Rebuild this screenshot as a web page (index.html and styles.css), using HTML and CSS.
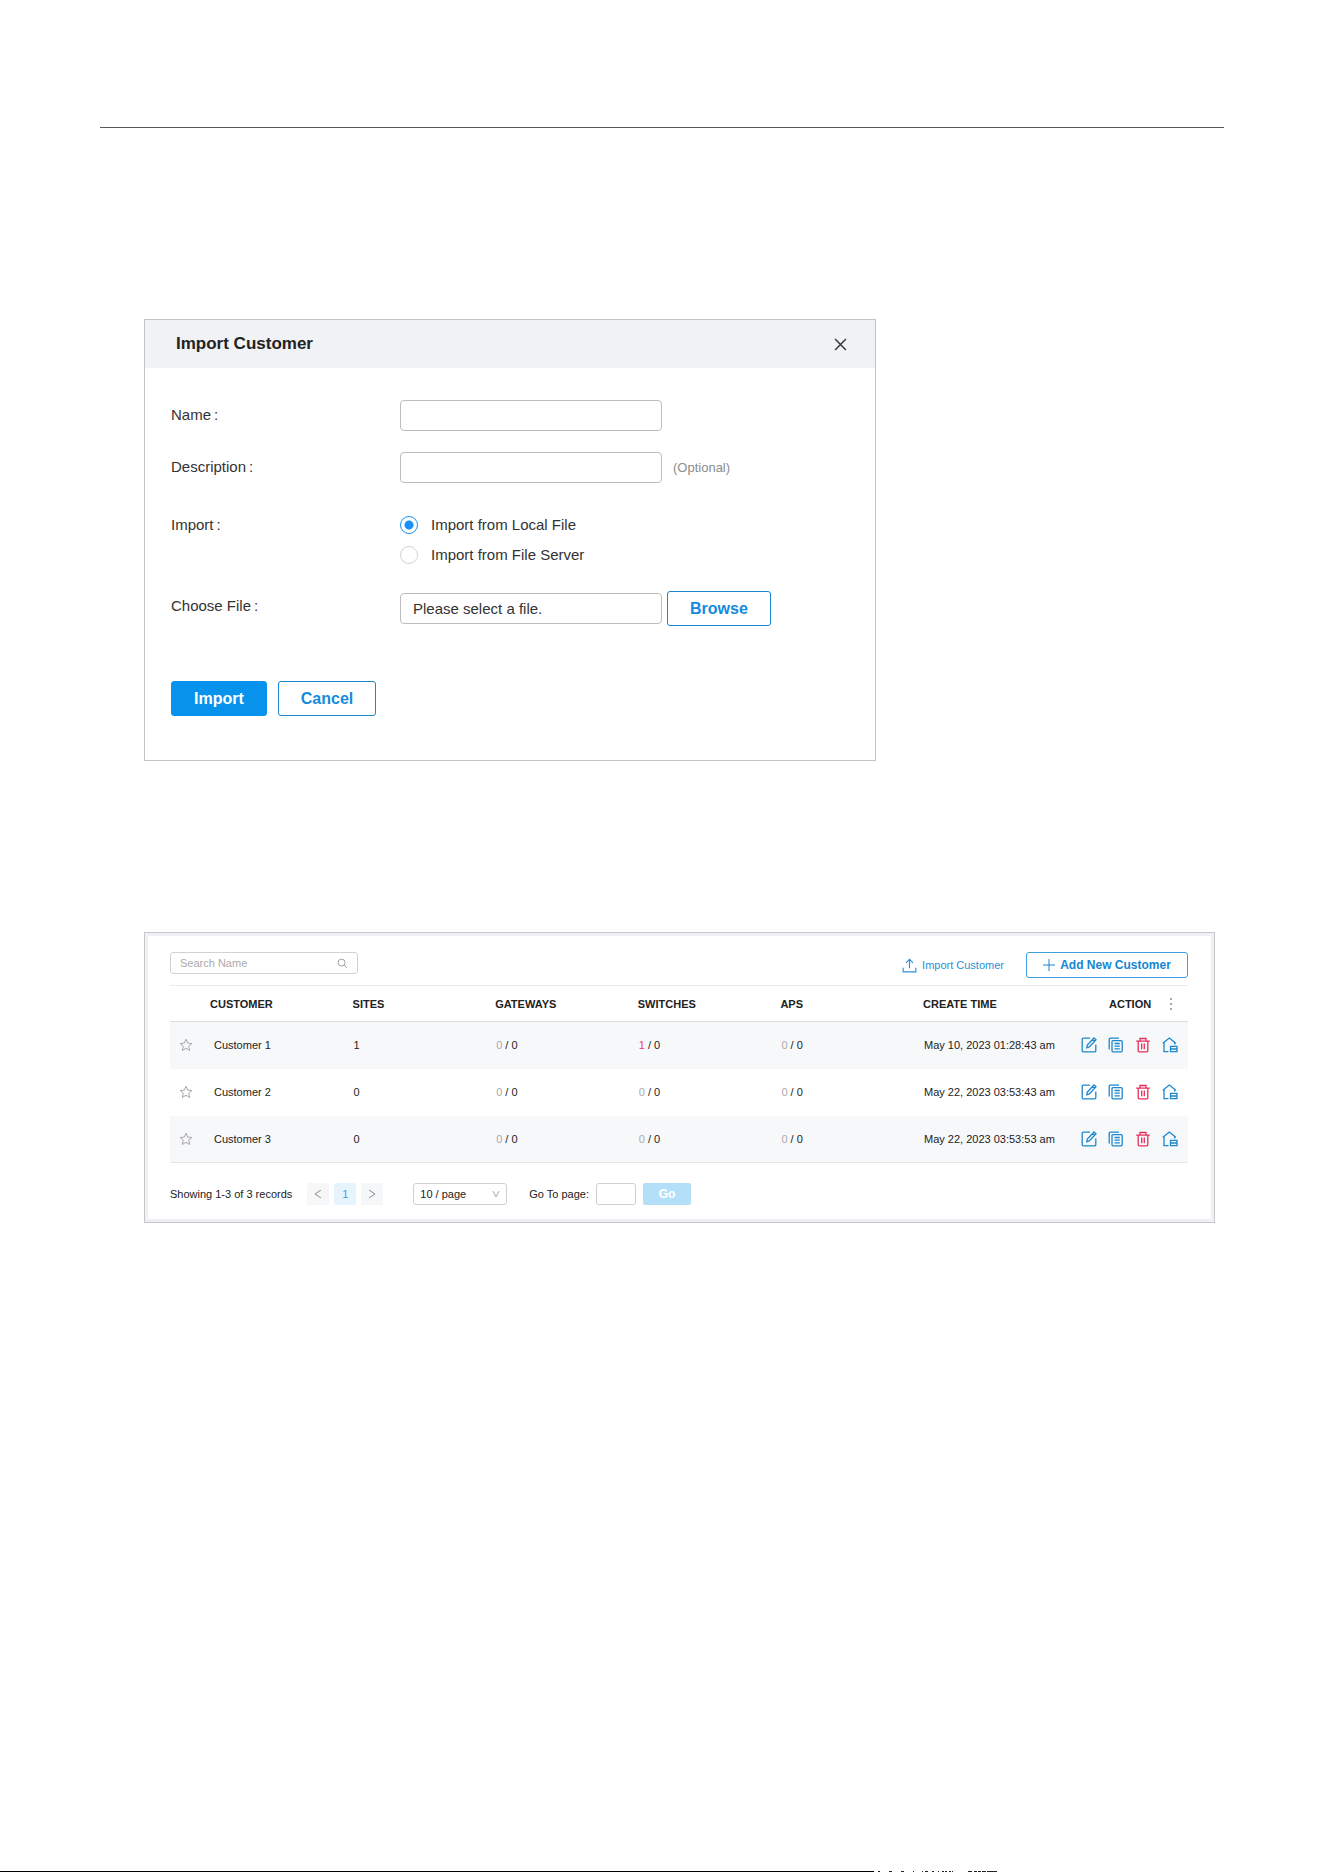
FILE: index.html
```html
<!DOCTYPE html>
<html lang="en">
<head>
  <meta charset="utf-8">
  <title>Import Customer</title>
  <link rel="stylesheet" href="styles.css">
</head>
<body>
  <!-- shared icons -->
  <svg class="sprite" aria-hidden="true">
    <symbol id="star" viewBox="0 0 14 14">
      <path d="M7 1.200l1.700 3.900 4.200.4-3.200 2.800 1 4.200L7 10.300l-3.700 2.200 1-4.200L1.100 5.500l4.200-.4z"/>
    </symbol>
    <symbol id="edit" viewBox="0 0 16 16">
      <path d="M9 1.200H2.200a1 1 0 0 0-1 1v11.600a1 1 0 0 0 1 1h11.600a1 1 0 0 0 1-1V7.500M5.800 10.800l.5-2.800L13 1l2 1.700L8.300 9.900zM11.500 2.700l2 1.700"/>
    </symbol>
    <symbol id="copy" viewBox="0 0 16 16">
      <path d="M1.200 12.500V2.200a1 1 0 0 1 1-1H11M5 3.600h8.200a1 1 0 0 1 1 1v9.200a1 1 0 0 1-1 1H5a1 1 0 0 1-1-1V4.600a1 1 0 0 1 1-1zM6.500 6.500h5.300M6.500 9.200h5.300M6.500 11.900h5.300"/>
    </symbol>
    <symbol id="trash" viewBox="0 0 16 16">
      <path d="M1.200 4.200h13.600M5 4V1.500h6V4M3.200 4.500v9.300a1 1 0 0 0 1 1h7.600a1 1 0 0 0 1-1V4.500M6.700 6.500v5.800M9.300 6.500v5.800"/>
    </symbol>
    <symbol id="house" viewBox="0 0 16 16">
      <path d="M.8 6.300L7.300 1l6.500 5.300M2 5.600v9.100h4.500M12.700 5.600v2M8.500 9.300H15v5.400H8.500zM8.500 12H15"/>
    </symbol>
  </svg>

  <main class="page">
    <hr class="rule">

    <form class="dialog">
      <header class="dialog-header">
        <h2>Import Customer</h2>
        <button type="button" class="close" aria-label="Close">
          <svg viewBox="0 0 12 12"><path d="M1 1l10 10M11 1L1 11"/></svg>
        </button>
      </header>
      <div class="dialog-body">
        <div class="row">
          <label class="name" for="name">Name<span>:</span></label>
          <input type="text" class="field" id="name">
        </div>
        <div class="row">
          <label class="name" for="description">Description<span>:</span></label>
          <input type="text" class="field" id="description">
          <small>(Optional)</small>
        </div>
        <div class="row" role="radiogroup" aria-labelledby="importLabel">
          <div class="name radio-name" id="importLabel">Import<span>:</span></div>
          <div class="radios">
            <label><input type="radio" name="source" checked>Import from Local File</label>
            <label><input type="radio" name="source">Import from File Server</label>
          </div>
        </div>
        <div class="row">
          <label class="name" for="file">Choose File<span>:</span></label>
          <div class="file">
            <input type="text" class="field" id="file" value="Please select a file." readonly>
            <button type="button" class="btn">Browse</button>
          </div>
        </div>
        <div class="actions">
          <button type="button" class="btn primary">Import</button>
          <button type="button" class="btn">Cancel</button>
        </div>
      </div>
    </form>

    <section class="panel">
      <div class="toolbar">
        <div class="search">
          <input type="text" placeholder="Search Name" aria-label="Search Name">
          <svg viewBox="0 0 12 12"><circle cx="5" cy="5" r="3.800"/><path d="M7.800 7.800l3 3"/></svg>
        </div>
        <a href="#" class="import-link">
          <svg viewBox="0 0 16 16"><path d="M8 11V1.500M4.300 5.200L8 1.500l3.700 3.700M1.200 10.500v4.300h13.600v-4.300"/></svg>
          Import Customer
        </a>
        <button type="button" class="add">
          <svg viewBox="0 0 12 12"><path d="M6 0v12M0 6h12"/></svg>
          Add New Customer
        </button>
      </div>

      <table>
        <thead>
          <tr>
            <th class="col-star"></th>
            <th>CUSTOMER</th>
            <th>SITES</th>
            <th>GATEWAYS</th>
            <th>SWITCHES</th>
            <th>APS</th>
            <th class="col-time">CREATE TIME</th>
            <th class="col-action">
              <div class="action-head">ACTION
                <svg viewBox="0 0 4 14"><path d="M1 1h2v2H1zM1 6h2v2H1zM1 11h2v2H1z"/></svg>
              </div>
            </th>
          </tr>
        </thead>
        <tbody>
          <tr>
            <td><button type="button" class="icon star" aria-label="Favorite"><svg><use href="#star"/></svg></button></td>
            <td class="customer">Customer 1</td>
            <td>1</td>
            <td><span class="off">0</span> / 0</td>
            <td><span class="alert">1</span> / 0</td>
            <td><span class="off">0</span> / 0</td>
            <td>May 10, 2023 01:28:43 am</td>
            <td class="tools"><div>
              <button type="button" class="icon" aria-label="Edit"><svg><use href="#edit"/></svg></button>
              <button type="button" class="icon" aria-label="Copy"><svg><use href="#copy"/></svg></button>
              <button type="button" class="icon delete" aria-label="Delete"><svg><use href="#trash"/></svg></button>
              <button type="button" class="icon" aria-label="Sites"><svg><use href="#house"/></svg></button>
            </div></td>
          </tr>
          <tr>
            <td><button type="button" class="icon star" aria-label="Favorite"><svg><use href="#star"/></svg></button></td>
            <td class="customer">Customer 2</td>
            <td>0</td>
            <td><span class="off">0</span> / 0</td>
            <td><span class="off">0</span> / 0</td>
            <td><span class="off">0</span> / 0</td>
            <td>May 22, 2023 03:53:43 am</td>
            <td class="tools"><div>
              <button type="button" class="icon" aria-label="Edit"><svg><use href="#edit"/></svg></button>
              <button type="button" class="icon" aria-label="Copy"><svg><use href="#copy"/></svg></button>
              <button type="button" class="icon delete" aria-label="Delete"><svg><use href="#trash"/></svg></button>
              <button type="button" class="icon" aria-label="Sites"><svg><use href="#house"/></svg></button>
            </div></td>
          </tr>
          <tr>
            <td><button type="button" class="icon star" aria-label="Favorite"><svg><use href="#star"/></svg></button></td>
            <td class="customer">Customer 3</td>
            <td>0</td>
            <td><span class="off">0</span> / 0</td>
            <td><span class="off">0</span> / 0</td>
            <td><span class="off">0</span> / 0</td>
            <td>May 22, 2023 03:53:53 am</td>
            <td class="tools"><div>
              <button type="button" class="icon" aria-label="Edit"><svg><use href="#edit"/></svg></button>
              <button type="button" class="icon" aria-label="Copy"><svg><use href="#copy"/></svg></button>
              <button type="button" class="icon delete" aria-label="Delete"><svg><use href="#trash"/></svg></button>
              <button type="button" class="icon" aria-label="Sites"><svg><use href="#house"/></svg></button>
            </div></td>
          </tr>
        </tbody>
      </table>

      <div class="pager">
        <span>Showing 1-3 of 3 records</span>
        <div class="pages">
          <button type="button" aria-label="Previous page"><svg viewBox="0 0 8 8"><path d="M7 0L1 4l6 4"/></svg></button>
          <button type="button" class="current">1</button>
          <button type="button" aria-label="Next page"><svg viewBox="0 0 8 8"><path d="M1 0l6 4-6 4"/></svg></button>
        </div>
        <div class="size">
          <select aria-label="Page size"><option>10 / page</option></select>
          <svg viewBox="0 0 8 8"><path d="M1 1l3 6 3-6"/></svg>
        </div>
        <div class="goto">
          <label for="goto">Go To page:</label>
          <input type="text" id="goto">
          <button type="button">Go</button>
        </div>
      </div>
    </section>
  </main>

  <footer>
    <div class="line"></div>
    <svg class="ticks" viewBox="0 0 124 1" preserveAspectRatio="none">
      <path d="M4 0h2v1h-2zM15 0h3v1h-3zM27 0h3v1h-3zM39 0h1v1h-1zM48 0h1v1h-1zM51 0h3v1h-3zM58 0h2v1h-2zM64 0h1v1h-1zM68 0h2v1h-2zM71 0h2v1h-2zM75 0h2v1h-2zM78 0h1v1h-1zM94 0h4v1h-4zM100 0h3v1h-3zM104 0h3v1h-3zM108 0h4v1h-4zM113 0h10v1h-10z"/>
    </svg>
  </footer>
</body>
</html>
```

FILE: styles.css
```css
* {
  box-sizing: border-box;
}
body {
  display: flex;
  flex-direction: column;
  min-height: 100vh;
  margin: 0;
  background-color: #fff;
  color: #333;
  font-family: "Liberation Sans", Arial, sans-serif;
  font-size: 15px;
}
button, input, select {
  margin: 0;
  padding: 0;
  font-family: inherit;
}
button {
  cursor: pointer;
}
svg {
  display: block;
  fill: none;
  stroke: currentColor;
}
.sprite {
  position: absolute;
  width: 0;
  height: 0;
}
.page {
  padding: 127px 100px 0;
}
.rule {
  height: 1px;
  margin: 0;
  border: none;
  background-color: #58595b;
}

/* import dialog */
.dialog {
  max-width: 732px;
  margin: 191px 0 0 44px;
  border: 1px solid #c4c4c6;
}
.dialog-header {
  display: flex;
  justify-content: space-between;
  align-items: center;
  height: 48px;
  padding: 0 28px 0 31px;
  background-color: #f1f2f5;
}
.dialog-header h2 {
  margin: 0;
  color: #222;
  font-size: 17px;
}
.close {
  border: none;
  background: none;
  color: #333;
}
.close svg {
  width: 13px;
  height: 13px;
  stroke-width: 1.3;
}
.dialog-body {
  display: flex;
  flex-direction: column;
  gap: 21px;
  padding: 32px 26px 44px;
}
.row {
  display: flex;
  align-items: flex-start;
  line-height: 31px;
}
.name {
  width: 229px;
  line-height: 29px;
}
.name span {
  margin-left: 3px;
}
.field {
  width: 262px;
  height: 31px;
  padding: 0 12px;
  border: 1px solid #bdbdbd;
  border-radius: 4px;
  color: #333;
  font-size: 15px;
}
.row small {
  margin-left: 11px;
  color: #8c8c8c;
  font-size: 13px;
}
.radios {
  padding-top: 6px;
}
.radio-name {
  padding-top: 6px;
}
.radios label {
  display: flex;
  align-items: center;
  gap: 13px;
  line-height: 30px;
}
.radios input {
  appearance: none;
  width: 18px;
  height: 18px;
  border: 1px solid #d4d4d4;
  border-radius: 50%;
}
.radios input:checked {
  border-color: #1890f0;
  background: radial-gradient(circle, #1890f8 4px, #fff 5px);
}
.file {
  display: flex;
  align-items: center;
  gap: 5px;
}
.btn {
  height: 35px;
  padding: 0 22px;
  border: 1px solid #1a86cf;
  border-radius: 3px;
  background-color: #fff;
  color: #148bdc;
  font-size: 16px;
  font-weight: bold;
}
.btn.primary {
  border-color: #0792ec;
  background-color: #0792ec;
  color: #fff;
}
.actions {
  display: flex;
  gap: 11px;
  margin-top: 34px;
}

/* customer list */
.panel {
  margin: 171px 9px 0 44px;
  padding: 16px 26px 17px 25px;
  border: 1px solid #c8c8ca;
  box-shadow: inset 0 0 0 3px #eff0f3;
  color: #222;
  font-size: 11px;
}
.toolbar {
  display: flex;
  align-items: flex-start;
  padding: 3px 0 7px;
}
.search {
  display: flex;
  align-items: center;
  width: 188px;
  height: 22px;
  margin-right: auto;
  padding: 0 9px;
  border: 1px solid #d2d2d2;
  border-radius: 3px;
}
.search input {
  flex: 1;
  min-width: 0;
  border: none;
  outline: none;
  font-size: 11px;
}
.search input::placeholder {
  color: #aaa;
}
.search svg {
  width: 11px;
  height: 11px;
  color: #999;
}
.import-link {
  display: flex;
  align-items: center;
  gap: 5px;
  height: 26px;
  margin-right: 22px;
  color: #2790d8;
  text-decoration: none;
}
.import-link svg {
  width: 15px;
  height: 15px;
  stroke-width: 1.2;
}
.add {
  display: flex;
  align-items: center;
  justify-content: center;
  gap: 5px;
  width: 162px;
  height: 26px;
  border: 1px solid #3f9fdb;
  border-radius: 3px;
  background-color: #fff;
  color: #1686d2;
  font-size: 12px;
  font-weight: bold;
}
.add svg {
  width: 12px;
  height: 12px;
}
table {
  width: 100%;
  border-collapse: collapse;
  table-layout: fixed;
  border-top: 1px solid #ebebed;
  border-bottom: 1px solid #e6e6e8;
}
th, td {
  padding: 0;
  text-align: left;
  white-space: nowrap;
}
th {
  height: 36px;
  border-bottom: 1px solid #dcdddf;
}
td {
  height: 47px;
  padding-left: 1px;
}
tbody tr:nth-child(odd) {
  background-color: #f7f8fa;
}
.col-star {
  width: 40px;
}
.col-time {
  width: 158px;
}
.col-action {
  width: 107px;
}
.action-head {
  display: flex;
  align-items: center;
  justify-content: space-between;
  padding: 0 15px 0 28px;
}
.action-head svg {
  width: 4px;
  height: 14px;
  fill: #aaa;
  stroke: none;
}
.customer {
  padding-left: 4px;
}
.off {
  color: #aaa;
}
.alert {
  color: #ee4466;
}
.icon {
  display: block;
  border: none;
  background: none;
  color: #1c87cc;
}
.icon svg {
  width: 16px;
  height: 16px;
  stroke-width: 1.3;
}
.icon.star {
  margin-left: 8px;
  color: #a8a8a8;
}
.star svg {
  width: 14px;
  height: 14px;
  stroke-width: 1;
}
.icon.delete {
  color: #e6305c;
}
.tools {
  padding-left: 0;
}
.tools div {
  display: flex;
  gap: 11px;
}
.pager {
  display: flex;
  align-items: center;
  padding-top: 20px;
}
.pages {
  display: flex;
  gap: 5px;
  margin: 0 30px 0 15px;
}
.pages button {
  display: flex;
  align-items: center;
  justify-content: center;
  width: 22px;
  height: 22px;
  border: none;
  border-radius: 2px;
  background-color: #f6f7f9;
  color: #888;
  font-size: 11px;
}
.pages svg {
  width: 8px;
  height: 8px;
}
.pages .current {
  background-color: #e6f4fd;
  color: #3aa0e8;
}
.size {
  display: grid;
  align-items: center;
  width: 94px;
}
.size select, .size svg {
  grid-area: 1 / 1;
}
.size select {
  appearance: none;
  height: 22px;
  padding: 0 6px;
  border: 1px solid #cfcfcf;
  border-radius: 3px;
  background-color: #fff;
  color: #222;
  font-size: 11px;
}
.size svg {
  justify-self: end;
  width: 8px;
  height: 8px;
  margin-right: 7px;
  color: #aaa;
  pointer-events: none;
}
.goto {
  display: flex;
  align-items: center;
  gap: 7px;
  margin-left: 22px;
}
.goto input {
  width: 40px;
  height: 22px;
  border: 1px solid #cfcfcf;
  border-radius: 3px;
}
.goto button {
  width: 48px;
  height: 22px;
  border: none;
  border-radius: 2px;
  background-color: #b3dff9;
  color: #fff;
  font-size: 12px;
  font-weight: bold;
}

/* bottom edge */
footer {
  display: flex;
  margin-top: auto;
}
.line {
  width: 66%;
  height: 1px;
  background-color: #000;
}
.ticks {
  width: 124px;
  height: 1px;
  fill: #222;
  stroke: none;
}
```
